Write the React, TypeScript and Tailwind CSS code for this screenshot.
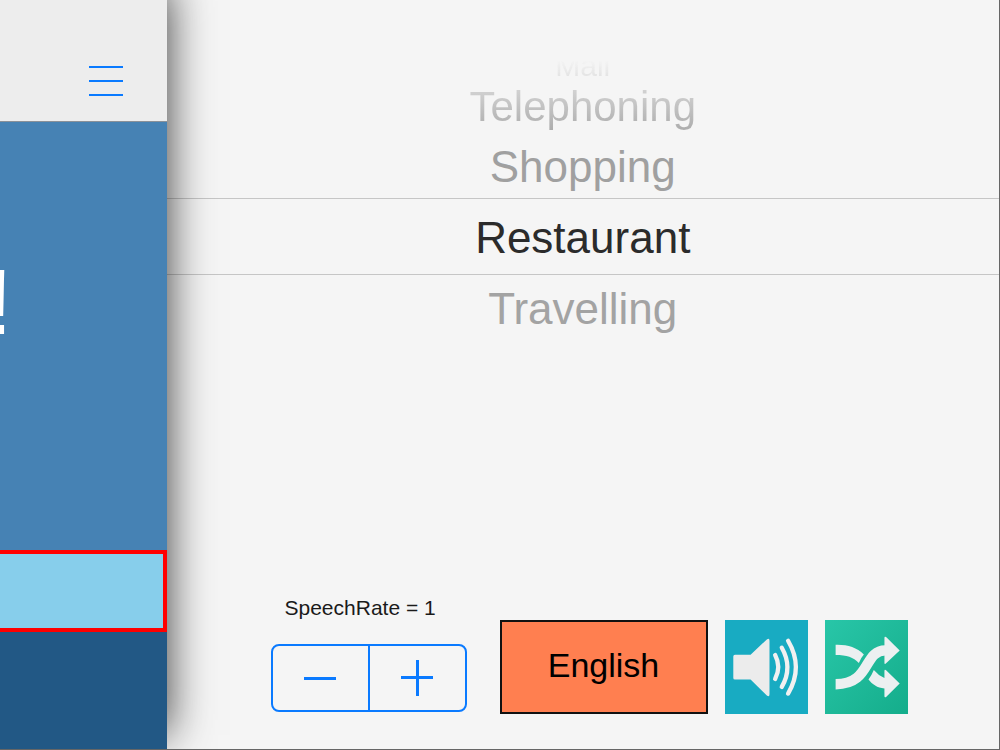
// src/App.tsx
import React, { useState } from 'react';

const SpeakerIcon: React.FC = () => (
  <svg viewBox="0 0 250 282" className="w-full h-full" fill="none" aria-hidden="true">
    <path
      d="M30 104H77L126 58Q134 52 134 62V223Q134 233 126 227L77 179H30Q25 179 25 174V109Q25 104 30 104Z"
      fill="#ececec"
    />
    <g stroke="#f1f1f1" strokeWidth="13" strokeLinecap="round">
      <path d="M151 105Q170 141 151 177" />
      <path d="M171 83Q205 142 171 201" />
      <path d="M190 62Q237 142 190 221" />
    </g>
  </svg>
);

const ShuffleIcon: React.FC = () => (
  <svg viewBox="0 0 250 282" className="w-full h-full" fill="none" aria-hidden="true">
    <path d="M32 74C68 73 95 82 117 103Q107 114 102 129C85 112 66 105 32 105Z" fill="#ecf0f1" />
    <path d="M32 193C140 193 114 91 182 91" stroke="#ecf0f1" strokeWidth="31" />
    <path d="M147 150Q160 166 179 174V154Q179 147 184 151L225 191L184 231Q179 234 179 228V206C157 204 143 194 131 179Q140 167 147 150Z" fill="#ecf0f1" />
    <path d="M179 54Q179 47 184 51L225 91L184 130Q179 134 179 128Z" fill="#ecf0f1" />
  </svg>
);

const App: React.FC = () => {
  const [topic, setTopic] = useState('Restaurant');
  const [rate, setRate] = useState(1);

  return (
    <div className="flex min-h-screen overflow-hidden border-r border-b border-[#666] bg-[#f5f5f5] font-['Liberation_Sans',Arial,sans-serif]">
      {/* Main screen, slid away to the left */}
      <section className="relative z-10 flex w-1/6 flex-col bg-[#4682b4] shadow-[0_-14px_42px_rgba(0,0,0,0.78)]">
        <header className="flex h-[122px] justify-end border-b border-[#8a9199] bg-[#ededed] pt-[62px] pr-[41px]">
          <button type="button" aria-label="Menu" className="flex h-[38px] w-[40px] flex-col items-center justify-center gap-3">
            <span className="h-[2px] w-[34px] bg-[#0a7aff]" />
            <span className="h-[2px] w-[34px] bg-[#0a7aff]" />
            <span className="h-[2px] w-[34px] bg-[#0a7aff]" />
          </button>
        </header>
        <div className="flex flex-1 items-start justify-end overflow-hidden pt-[134px] pr-[154px]">
          <p className="text-[92px] leading-[92px] text-white">!</p>
        </div>
        <div className="h-[82px] border-4 border-l-0 border-[#ff0000] bg-[#87ceeb]" />
        <div className="h-[117px] bg-[#225885]" />
      </section>

      {/* Settings drawer */}
      <main className="flex flex-1 flex-col justify-between">
        <div role="listbox" aria-label="Topic" className="flex flex-col pt-[51px] text-[44px]">
          <button
            type="button"
            role="option"
            aria-selected={topic === 'Mail'}
            onClick={() => setTopic('Mail')}
            className="h-8 bg-linear-to-b from-transparent from-30% to-[#dcdcdc] bg-clip-text pb-[2px] text-[30px] leading-[30px] text-transparent"
          >
            Mail
          </button>
          <button
            type="button"
            role="option"
            aria-selected={topic === 'Telephoning'}
            onClick={() => setTopic('Telephoning')}
            className="h-[53px] bg-linear-to-b from-[#d8d8d8] to-[#a8a8a8] bg-clip-text pb-[6px] text-[42px] leading-[47px] text-transparent"
          >
            Telephoning
          </button>
          <button
            type="button"
            role="option"
            aria-selected={topic === 'Shopping'}
            onClick={() => setTopic('Shopping')}
            className="h-[62px] leading-[62px] text-[#a0a0a0]"
          >
            Shopping
          </button>
          <button
            type="button"
            role="option"
            aria-selected={topic === 'Restaurant'}
            onClick={() => setTopic('Restaurant')}
            className="h-[77px] border-y border-[#c6c6c6] leading-[77px] text-[#2b2b2b]"
          >
            Restaurant
          </button>
          <button
            type="button"
            role="option"
            aria-selected={topic === 'Travelling'}
            onClick={() => setTopic('Travelling')}
            className="h-[68px] leading-[68px] text-[#a3a3a3]"
          >
            Travelling
          </button>
        </div>

        <div className="flex items-end gap-[17px] pb-[35px] pl-[104px]">
          <div className="mr-4 flex flex-col pb-[2px]">
            <p className="mb-6 pl-[14px] text-[21px] leading-6 text-[#1a1a1a]">SpeechRate = {rate}</p>
            <div className="flex h-[68px] w-[196px] divide-x-2 divide-[#0a7aff] rounded-lg border-2 border-[#0a7aff]">
              <button
                type="button"
                aria-label="Slower"
                onClick={() => setRate(rate - 1)}
                className="flex flex-1 items-center justify-center"
              >
                <svg viewBox="0 0 36 36" className="size-9" stroke="#0a7aff" strokeWidth="3">
                  <path d="M2 18.5H34" />
                </svg>
              </button>
              <button
                type="button"
                aria-label="Faster"
                onClick={() => setRate(rate + 1)}
                className="flex flex-1 items-center justify-center"
              >
                <svg viewBox="0 0 36 36" className="size-9" stroke="#0a7aff" strokeWidth="3">
                  <path d="M2 17.5H34M18.5 0V36" />
                </svg>
              </button>
            </div>
          </div>
          <button type="button" className="h-[94px] w-[208px] border-2 border-[#111] bg-[#ff7f50] pb-1 text-[34px] text-black">
            English
          </button>
          <button type="button" aria-label="Speak" className="h-[94px] w-[83px] bg-[#18abc2]">
            <SpeakerIcon />
          </button>
          <button type="button" aria-label="Shuffle" className="h-[94px] w-[83px] bg-linear-to-br from-[#28c6a8] to-[#14ad8b]">
            <ShuffleIcon />
          </button>
        </div>
      </main>
    </div>
  );
};

export default App;
